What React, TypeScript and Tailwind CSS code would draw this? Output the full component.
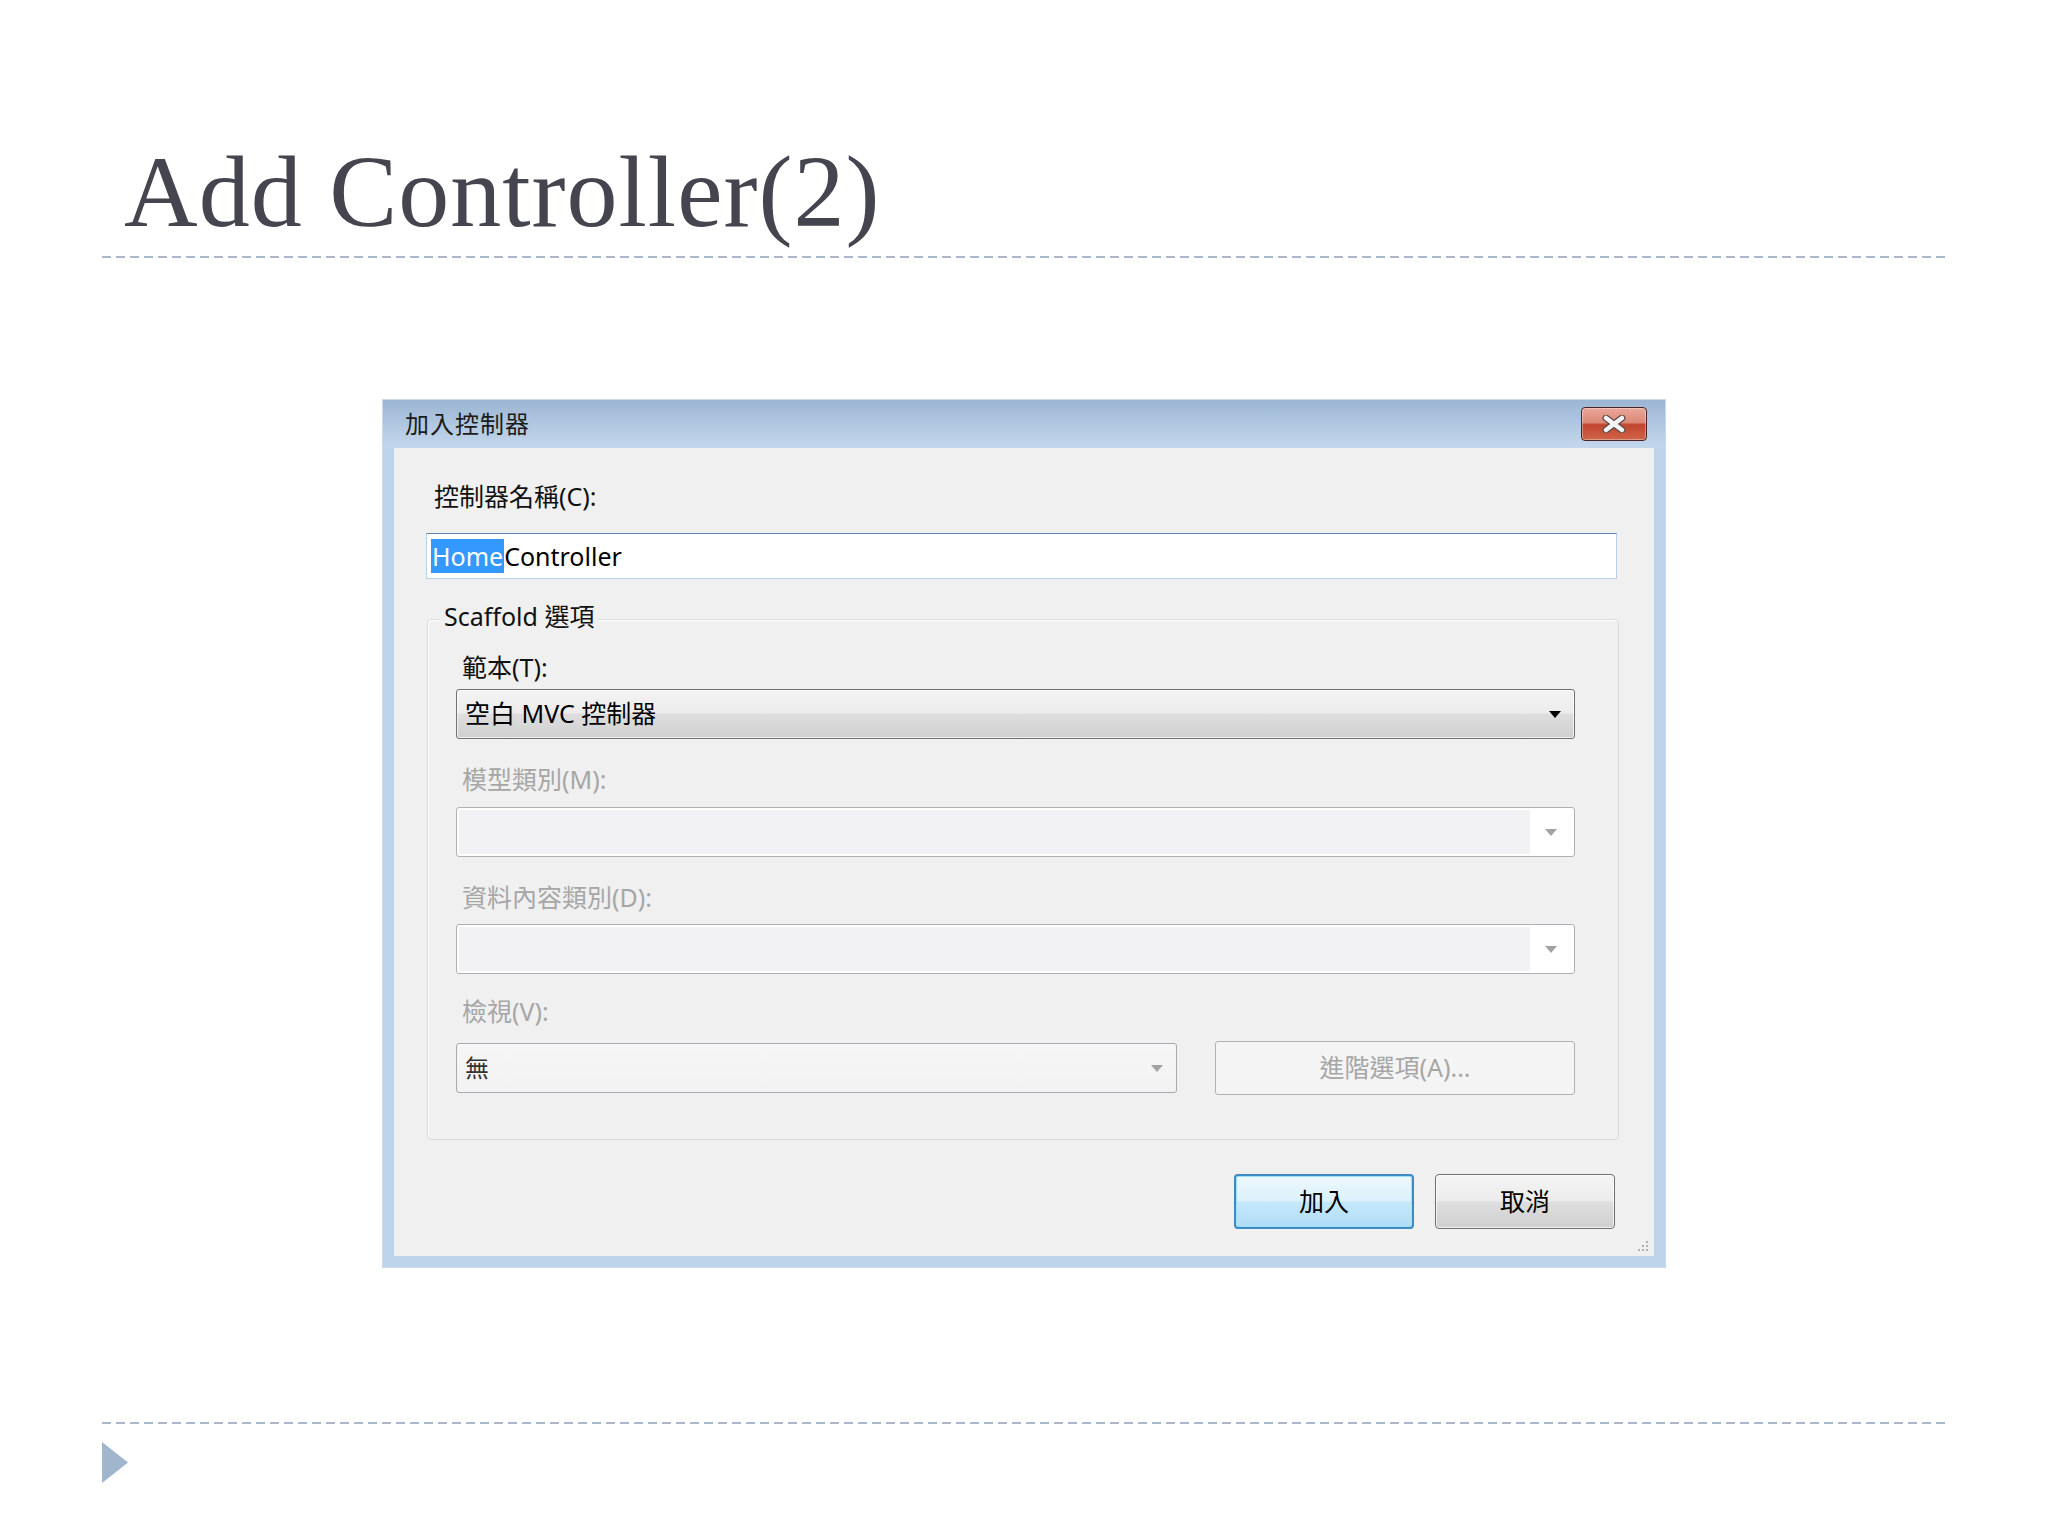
import React from 'react'

const ui = "font-['Noto_Sans','Noto_Sans_CJK_TC',sans-serif]"
const dashed = 'h-[2px] w-[1844px] ml-[102px] bg-[repeating-linear-gradient(90deg,#a9b8ca_0px,#a9b8ca_9px,transparent_9px,transparent_14px)]'

function Arrow({ color }: { color: string }) {
  return (
    <svg width="14" height="9" viewBox="0 0 14 9">
      <polygon points="1,1 13,1 7,8" fill={color} />
    </svg>
  )
}

function CloseButton() {
  return (
    <div className="w-[66px] h-[34px] rounded-[4px] border border-[#4a2424] bg-[linear-gradient(180deg,#eaa698_0%,#dc8a79_45%,#c3452e_52%,#cf6548_100%)] flex items-center justify-center shadow-[inset_0_0_0_1px_rgba(255,255,255,0.35)]">
      <svg width="26" height="18" viewBox="0 0 26 18">
        <path d="M5 3 L21 15 M21 3 L5 15" stroke="#5a4a48" strokeWidth="7" strokeLinecap="round" />
        <path d="M5 3 L21 15 M21 3 L5 15" stroke="#f4f4f4" strokeWidth="4.5" strokeLinecap="round" />
      </svg>
    </div>
  )
}

function Label({ text, disabled }: { text: string; disabled?: boolean }) {
  return (
    <div className={`ml-[6px] h-[32px] leading-[32px] text-[25px] ${disabled ? 'text-[#a6a6a6]' : 'text-[#111]'}`}>
      {text}
    </div>
  )
}

function DisabledCombo({ className }: { className: string }) {
  return (
    <div className={`${className} h-[50px] rounded-[3px] border border-[#adb2b5] bg-white p-[2px] flex`}>
      <div className="flex-1 bg-[#f2f2f4]" />
      <div className="w-[42px] flex items-center justify-center">
        <Arrow color="#a2a2a2" />
      </div>
    </div>
  )
}

function Dialog() {
  return (
    <div className={`${ui} mt-[142px] mx-auto w-[1282px] h-[867px] bg-[#bed4ea] flex flex-col shadow-[0_0_0_1px_#c9d9ea]`}>
      <div className="h-[48px] shrink-0 bg-[linear-gradient(180deg,#9bb5d3_0%,#b2c9e2_55%,#c3d7ec_100%)] flex items-center justify-between pl-[22px] pr-[18px]">
        <span className="text-[24px] text-[#1b1b1b] tracking-[1px]">加入控制器</span>
        <CloseButton />
      </div>
      <div className="mx-[11px] h-[808px] bg-[#f0f0f0] flex flex-col px-[32px] pt-[32px] relative">
        <div className="ml-[8px] h-[32px] leading-[32px] text-[25px] text-[#111]">控制器名稱(C):</div>

        <div className="mt-[21px] w-[1191px] h-[46px] bg-white border border-[#b7d0e6] border-t-[#5a86b0] flex items-center px-[4px]">
          <span className="text-[25px] leading-[34px] bg-[#3399ff] text-white px-[1px]">Home</span>
          <span className="text-[25px] leading-[34px] text-black">Controller</span>
        </div>

        <div className="mt-[40px] ml-[1px] w-[1192px] h-[521px] rounded-[4px] border border-[#d5dde3] shadow-[inset_1px_1px_0_#ffffff] relative flex flex-col pl-[28px] pt-[31px]">
          <div className="absolute left-[12px] top-[-20px] px-[4px] bg-[#f0f0f0] text-[25px] leading-[32px] text-[#111]">
            Scaffold 選項
          </div>

          <Label text="範本(T):" />
          <div className="mt-[6px] w-[1119px] h-[50px] rounded-[3px] border border-[#707070] bg-[linear-gradient(180deg,#f3f3f3_0%,#ececec_48%,#dedede_50%,#cfcfcf_100%)] shadow-[inset_0_0_0_1px_rgba(255,255,255,0.7)] flex items-center justify-between pl-[8px] pr-[12px]">
            <span className="text-[25px] text-black">空白 MVC 控制器</span>
            <Arrow color="#000000" />
          </div>

          <div className="mt-[24px]">
            <Label text="模型類別(M):" disabled />
          </div>
          <DisabledCombo className="mt-[12px] w-[1119px]" />

          <div className="mt-[24px]">
            <Label text="資料內容類別(D):" disabled />
          </div>
          <DisabledCombo className="mt-[11px] w-[1119px]" />

          <div className="mt-[21px]">
            <Label text="檢視(V):" disabled />
          </div>
          <div className="mt-[14px] flex items-center gap-[38px]">
            <div className="w-[721px] h-[50px] rounded-[3px] border border-[#a9abae] bg-[linear-gradient(180deg,#f6f6f6_0%,#f2f2f2_100%)] flex items-center justify-between pl-[8px] pr-[12px]">
              <span className="text-[24px] text-[#333]">無</span>
              <Arrow color="#a2a2a2" />
            </div>
            <div className="w-[360px] h-[54px] rounded-[3px] border border-[#adb2b5] bg-[#f4f4f4] flex items-center justify-center text-[25px] text-[#a6a6a6]">
              進階選項(A)...
            </div>
          </div>
        </div>

        <div className="mt-[34px] flex justify-end gap-[21px] pr-[7px]">
          <div className="w-[180px] h-[55px] rounded-[4px] border-2 border-[#3d8ac4] bg-[linear-gradient(180deg,#eef8fe_0%,#dcf1fc_48%,#c4e8fb_52%,#b0ddf6_100%)] shadow-[inset_0_0_0_1px_#9fe0fb] flex items-center justify-center text-[25px] text-black">
            加入
          </div>
          <div className="w-[180px] h-[55px] rounded-[4px] border border-[#707070] bg-[linear-gradient(180deg,#f4f4f4_0%,#ececec_48%,#dedede_52%,#cfcfcf_100%)] shadow-[inset_0_0_0_1px_rgba(255,255,255,0.7)] flex items-center justify-center text-[25px] text-black">
            取消
          </div>
        </div>

        <svg className="absolute right-[4px] bottom-[3px]" width="14" height="14" viewBox="0 0 14 14">
          <rect x="10" y="2" width="2" height="2" fill="#b0b0b0" />
          <rect x="10" y="6" width="2" height="2" fill="#b0b0b0" />
          <rect x="6" y="6" width="2" height="2" fill="#b0b0b0" />
          <rect x="10" y="10" width="2" height="2" fill="#b0b0b0" />
          <rect x="6" y="10" width="2" height="2" fill="#b0b0b0" />
          <rect x="2" y="10" width="2" height="2" fill="#b0b0b0" />
        </svg>
      </div>
    </div>
  )
}

export default function App() {
  return (
    <div className="w-[2048px] h-[1536px] bg-white flex flex-col overflow-hidden">
      <h1 className="pt-[141px] pl-[124px] font-['Liberation_Serif',serif] text-[102px] leading-none tracking-[1px] text-[#45454f] font-normal">
        Add Controller(2)
      </h1>
      <div className={`mt-[13px] ${dashed}`} />

      <Dialog />

      <div className={`mt-[155px] ${dashed}`} />
      <svg className="mt-[18px] ml-[102px]" width="26" height="41" viewBox="0 0 26 41">
        <polygon points="0,0 26,20.5 0,41" fill="#9fb6cd" />
      </svg>
    </div>
  )
}
